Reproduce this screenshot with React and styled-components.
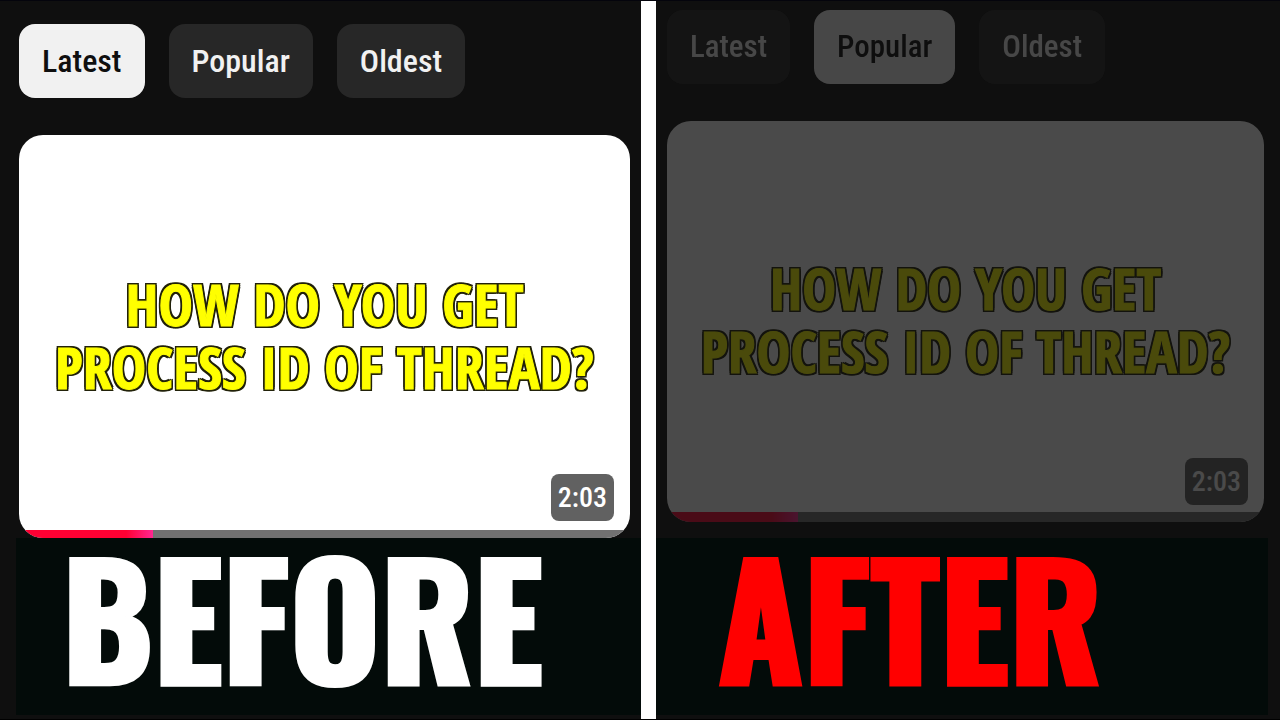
import React from "react";
import styled, { createGlobalStyle } from "styled-components";

const GlobalStyle = createGlobalStyle`
  * { box-sizing: border-box; }
  body { margin: 0; background: #0f0f0f; }
`;

const condensed = '"Roboto Condensed", Roboto, "Liberation Sans", sans-serif';

const Page = styled.main`
  display: grid;
  grid-template-columns: minmax(0, 641fr) 15px minmax(0, 624fr);
  min-height: 100vh;
  background: #0f0f0f;
  border-top: 1px solid #04040c;
  border-bottom: 1px solid #000000;
  font-family: ${condensed};
`;

const Divider = styled.div`
  background: #ffffff;
`;

const Pane = styled.section`
  display: flex;
  flex-direction: column;
`;

const Feed = styled.div`
  display: flex;
  flex-direction: column;
  gap: 37px;
  padding: ${(p) => (p.$dimmed ? "9px 16px 16px 11px" : "23px 11px 0 19px")};
  opacity: ${(p) => (p.$dimmed ? 0.25 : 1)};
`;

const Tabs = styled.div`
  display: flex;
  gap: 24px;
`;

const Tab = styled.button`
  height: 74px;
  padding: 0 23px;
  border: 0;
  border-radius: 16px;
  background: ${(p) => (p.$active ? "#f1f1f1" : "#272727")};
  color: ${(p) => (p.$active ? "#0f0f0f" : "#f1f1f1")};
  font-family: inherit;
  font-size: ${(p) => (p.$small ? 31 : 32)}px;
  font-weight: 500;
  line-height: 40px;
`;

const Thumbnail = styled.article`
  position: relative;
  display: flex;
  align-items: center;
  justify-content: center;
  aspect-ratio: ${(p) => p.$ratio};
  padding-bottom: 4px;
  overflow: hidden;
  border-radius: 24px;
  background: #ffffff;
`;

const Title = styled.h2`
  margin: 0;
  color: #ffff00;
  font-family: "Open Sans Condensed", "Open Sans", "Noto Sans", sans-serif;
  font-size: ${(p) => (p.$small ? 57 : 58)}px;
  font-weight: 700;
  line-height: 63px;
  text-align: center;
  white-space: nowrap;
  -webkit-text-stroke: 1px #ffff00;
  text-shadow:
    -2px 0 #22220a, 2px 0 #22220a, 0 -2px #22220a, 0 2px #22220a,
    -2px -2px #22220a, 2px -2px #22220a, -2px 2px #22220a, 2px 2px #22220a;
`;

const Duration = styled.span`
  position: absolute;
  right: 16px;
  bottom: 17px;
  padding: 0 7px;
  border-radius: 8px;
  background: #616161;
  color: #ffffff;
  font-size: 28px;
  font-weight: 500;
  line-height: 47px;
`;

const Progress = styled.div`
  position: absolute;
  right: 0;
  bottom: 0;
  left: 0;
  height: ${(p) => (p.$small ? 10 : 8)}px;
  background: #717171;
`;

const Watched = styled.div`
  width: 22%;
  height: 100%;
  background: linear-gradient(to right, #ff0033 80%, #ff2791 100%);
`;

const Band = styled.div`
  display: flex;
  flex: 1;
  align-items: center;
  margin: ${(p) => (p.$after ? "0 12px 4px 0" : "0 0 4px 16px")};
  padding-bottom: 26px;
  padding-left: ${(p) => (p.$after ? 62 : 46)}px;
  background: #030b09;
`;

const Caption = styled.h1`
  margin: 0;
  color: ${(p) => p.$color};
  font-family: Oswald, Anton, Impact, sans-serif;
  font-size: 155px;
  font-weight: 700;
  line-height: 150px;
  white-space: nowrap;
  -webkit-text-stroke: 4px ${(p) => p.$color};
`;

const sorts = ["Latest", "Popular", "Oldest"];

function ChannelFeed({ selected, dimmed }) {
  return (
    <Feed $dimmed={dimmed}>
      <Tabs>
        {sorts.map((name) => (
          <Tab
            key={name}
            type="button"
            aria-pressed={name === selected}
            $active={name === selected}
            $small={dimmed}
          >
            {name}
          </Tab>
        ))}
      </Tabs>
      <Thumbnail $ratio={dimmed ? "597 / 401" : "611 / 403"}>
        <Title $small={dimmed}>
          HOW DO YOU GET
          <br />
          PROCESS ID OF THREAD?
        </Title>
        <Duration>2:03</Duration>
        <Progress $small={dimmed}>
          <Watched />
        </Progress>
      </Thumbnail>
    </Feed>
  );
}

export default function App() {
  return (
    <>
      <GlobalStyle />
      <Page>
        <Pane>
          <ChannelFeed selected="Latest" />
          <Band>
            <Caption $color="#ffffff">BEFORE</Caption>
          </Band>
        </Pane>
        <Divider />
        <Pane>
          <ChannelFeed selected="Popular" dimmed />
          <Band $after>
            <Caption $color="#ff0000">AFTER</Caption>
          </Band>
        </Pane>
      </Page>
    </>
  );
}
